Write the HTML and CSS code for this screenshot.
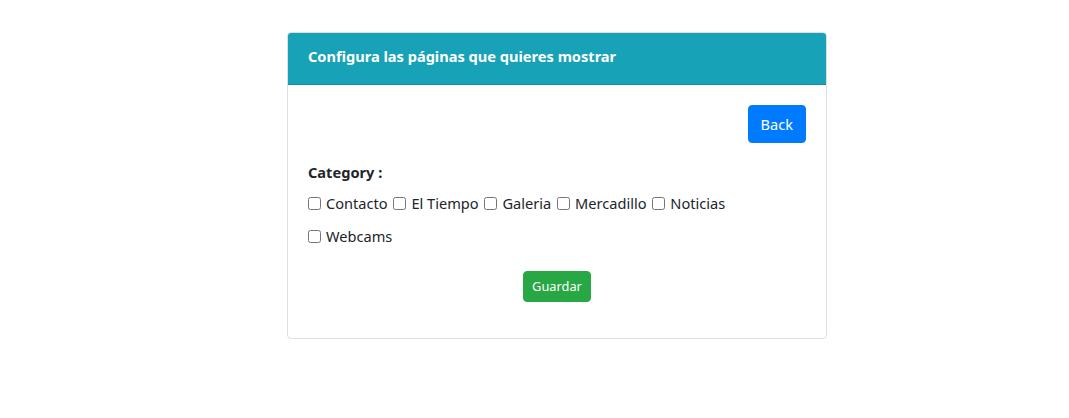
FILE: index.html
```html
<!DOCTYPE html>
<html lang="es">
<head>
<meta charset="utf-8">
<title>Configura las páginas</title>
<link rel="stylesheet" href="styles.css">
</head>
<body>
<div class="page">
  <div class="card">
    <div class="card-header">Configura las páginas que quieres mostrar</div>
    <div class="card-body">
      <div class="top-row">
        <button class="btn btn-back" type="button">Back</button>
      </div>
      <form class="form">
        <label class="cat-label">Category :</label>
        <div class="checks">
          <label class="check"><input type="checkbox">Contacto</label>
          <label class="check"><input type="checkbox">El Tiempo</label>
          <label class="check"><input type="checkbox">Galeria</label>
          <label class="check"><input type="checkbox">Mercadillo</label>
          <label class="check"><input type="checkbox">Noticias</label>
          <label class="check"><input type="checkbox">Webcams</label>
        </div>
        <div class="submit-row">
          <button class="btn btn-save" type="button">Guardar</button>
        </div>
      </form>
    </div>
  </div>
</div>
</body>
</html>
```

FILE: styles.css
```css
* { box-sizing: border-box; }
body {
  margin: 0;
  background: #fff;
  color: #212529;
  font-family: "Noto Sans", "Open Sans", sans-serif;
  font-size: 14.6px;
  line-height: 24px;
}
.page {
  padding: 32px 0 0 287px;
}
.card {
  width: 540px;
  border: 1px solid rgba(0,0,0,.125);
  border-radius: 4px;
  overflow: hidden;
}
.card-header {
  background: #17a2b8;
  color: #fff;
  font-weight: 700;
  padding: 11px 20px 16px;
  border-bottom: 1px solid rgba(0,0,0,.125);
}
.card-body {
  padding: 20px 20px 0;
}
.top-row {
  display: flex;
  justify-content: flex-end;
}
.btn {
  font-family: inherit;
  border: 1px solid transparent;
  border-radius: 4px;
  color: #fff;
  cursor: pointer;
}
.btn-back {
  background: #007bff;
  border-color: #007bff;
  font-size: 14.6px;
  line-height: 24px;
  padding: 6px 12px;
}
.form {
  margin: 0;
  padding-bottom: 36px;
}
.cat-label {
  display: block;
  font-weight: 700;
  margin-top: 17px;
  margin-bottom: 3px;
}
.checks {
  line-height: 33px;
}
.check {
  white-space: nowrap;
  margin-right: 2px;
}
.check input {
  width: 13px;
  height: 13px;
  margin: 0 5px 0 0;
  vertical-align: -1px;
}
.submit-row {
  display: flex;
  justify-content: center;
  margin-top: 18px;
}
.btn-save {
  background: #28a745;
  border-color: #28a745;
  font-size: 12.8px;
  line-height: 21px;
  padding: 4px 8px;
}
```
